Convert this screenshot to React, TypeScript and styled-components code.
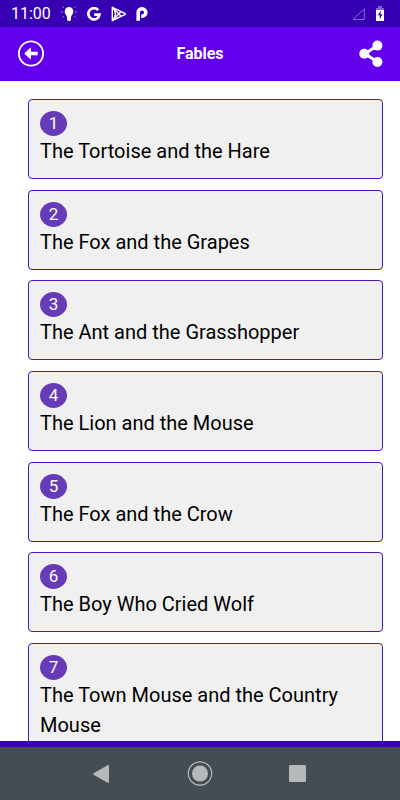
import React from "react";
import styled, { createGlobalStyle } from "styled-components";

const GlobalStyle = createGlobalStyle`
  * { box-sizing: border-box; }
  html, body, #root { height: 100%; margin: 0; }
  body { font-family: Roboto, sans-serif; background: #fff; color: #000; overflow: hidden; }
`;

const Screen = styled.div`
  height: 100%;
  display: flex;
  flex-direction: column;
`;

const StatusBar = styled.div`
  flex: none;
  height: 27px;
  padding: 0 16px 0 11px;
  display: flex;
  align-items: center;
  justify-content: space-between;
  background: #3700b3;
  color: #fff;
`;

const StatusGroup = styled.div<{ $gap: number }>`
  display: flex;
  align-items: center;
  gap: ${(p) => p.$gap}px;
`;

const Clock = styled.time`
  font-size: 16px;
  line-height: 20px;
  font-weight: 400;
`;

const AppBar = styled.header`
  flex: none;
  height: 54px;
  padding: 0 16px;
  display: flex;
  align-items: center;
  justify-content: space-between;
  background: #6200ee;
  color: #fff;
`;

const Title = styled.h1`
  margin: 0;
  font-size: 16px;
  line-height: 24px;
  font-weight: 700;
`;

const IconButton = styled.button`
  display: flex;
  justify-content: flex-end;
  min-width: 30px;
  padding: 0;
  border: 0;
  background: none;
  color: inherit;
  cursor: pointer;
`;

const Content = styled.main`
  flex: 1;
  min-height: 0;
  overflow: hidden;
  padding: 18px 17px 0 28px;
`;

const FableList = styled.ol`
  list-style: none;
  margin: 0;
  padding: 0;
`;

const FableItem = styled.li`
  margin-bottom: 3%;
`;

const FableCard = styled.a`
  display: block;
  padding: 11px;
  padding-bottom: 12px;
  border: 1px solid #4a16b8;
  border-radius: 4px;
  background: #f0f0f0;
  color: #000;
  text-decoration: none;
`;

const Badge = styled.span`
  display: block;
  width: 27px;
  height: 25px;
  border-radius: 50%;
  background: #673ab7;
  color: #fff;
  font-size: 17px;
  line-height: 25px;
  text-align: center;
`;

const FableName = styled.span`
  display: block;
  font-size: 20px;
  line-height: 30px;
`;

const NavBar = styled.nav`
  flex: none;
  height: 59px;
  border-top: 6px solid #3700b3;
  background: #454d52;
  color: #b5b9ba;
  display: flex;
  align-items: center;
  justify-content: center;
  gap: 68px;
`;

const fables = [
  "The Tortoise and the Hare",
  "The Fox and the Grapes",
  "The Ant and the Grasshopper",
  "The Lion and the Mouse",
  "The Fox and the Crow",
  "The Boy Who Cried Wolf",
  "The Town Mouse and the Country Mouse",
];

const BulbIcon = () => (
  <svg width="16" height="18" viewBox="0 0 16 18" fill="none" stroke="#fff">
    <path d="M8 2a4.4 4.4 0 0 0-4.3 4.5C3.7 9 5.6 10 6 12.4h4C10.4 10 12.3 9 12.3 6.5A4.4 4.4 0 0 0 8 2z" fill="#fff" stroke="none" />
    <path d="M6 12h4v3l-1 1H7l-1-1z" fill="#fff" stroke="none" />
    <path d="M0 7h2M14 7h2M1.5 1.5l1.3 1.3M14.5 1.5l-1.3 1.3M1.5 12.5l1.3-1.3M14.5 12.5l-1.3-1.3" strokeWidth="0.8" opacity="0.7" />
  </svg>
);

const GoogleIcon = () => (
  <svg width="14" height="14" viewBox="0 0 14 14" fill="none" stroke="#fff" strokeWidth="2.7">
    <path d="M11.2 3.1A5.6 5.6 0 1 0 12.5 7.6H7.2" />
  </svg>
);

const PlayIcon = () => (
  <svg width="15" height="16" viewBox="0 0 15 16" fill="none" stroke="#fff" strokeWidth="1.4" strokeLinejoin="round">
    <path d="M1.3 1.3v13.2L13.8 8.7q.8-.7 0-1.4z" />
    <path d="M1.3 1.3 10.2 10.2M1.3 14.5 10.2 5.4M1.5 1.5q5.8 6 0 13" />
  </svg>
);

const PIcon = () => (
  <svg width="12" height="14" viewBox="0 0 12 14" fill="none" stroke="#fff" strokeWidth="3.6">
    <path d="M2.2 13.8V5.8A3.8 3.7 0 1 1 6 9.2H5.2" />
  </svg>
);

const SignalIcon = () => (
  <svg width="13" height="12" viewBox="0 0 13 12" fill="none" stroke="#8d68d3">
    <path d="M12.3.8v10.7H1z" />
  </svg>
);

const BatteryIcon = () => (
  <svg width="8" height="15" viewBox="0 0 8 15">
    <path d="M2 0h4v2h2v2H0V2h2z" fill="#8060cc" />
    <path d="M0 4h8v11H0z" fill="#fff" />
    <path d="M5 4.5 1.7 9.2h2v4L6.5 8.3h-2z" fill="#3700b3" />
  </svg>
);

const BackIcon = () => (
  <svg width="30" height="28" viewBox="0 0 30 28" fill="none" stroke="#fff">
    <circle cx="15" cy="13.5" r="12.1" strokeWidth="1.9" />
    <path d="M14 11.7h7.7v3.6H14z" fill="#fff" stroke="none" />
    <path d="M8.7 13.5 14.5 8v11z" fill="#fff" strokeWidth="0.8" strokeLinejoin="round" />
  </svg>
);

const ShareIcon = () => (
  <svg width="25" height="28" viewBox="0 0 25 28" fill="#fff" stroke="#fff">
    <path d="M18.5 5.5 6 13.8l12.5 8.3" fill="none" strokeWidth="3" />
    <circle cx="5.3" cy="13.8" r="5" stroke="none" />
    <circle cx="18.4" cy="5.6" r="5" stroke="none" />
    <circle cx="18.4" cy="22" r="5" stroke="none" />
  </svg>
);

const NavBackIcon = () => (
  <svg width="30" height="26" viewBox="0 0 30 26" fill="currentColor">
    <path d="M6.6 12.3 20.5 4.2q1.5-.6 1.5.8v16q0 1.4-1.5.8L6.6 13.7q-1.1-.7 0-1.4z" />
  </svg>
);

const NavHomeIcon = () => (
  <svg width="30" height="26" viewBox="0 0 30 26" fill="currentColor">
    <circle cx="15" cy="12.5" r="11.7" fill="none" stroke="currentColor" strokeWidth="1.2" />
    <circle cx="15" cy="12.5" r="8" />
  </svg>
);

const NavRecentIcon = () => (
  <svg width="30" height="26" viewBox="0 0 30 26" fill="currentColor">
    <rect x="6" y="4" width="17" height="17" rx="1.2" />
  </svg>
);

export default function App() {
  return (
    <Screen>
      <GlobalStyle />
      <StatusBar>
        <StatusGroup $gap={10}>
          <Clock>11:00</Clock>
          <BulbIcon />
          <GoogleIcon />
          <PlayIcon />
          <PIcon />
        </StatusGroup>
        <StatusGroup $gap={11}>
          <SignalIcon />
          <BatteryIcon />
        </StatusGroup>
      </StatusBar>
      <AppBar>
        <IconButton type="button" aria-label="Back"><BackIcon /></IconButton>
        <Title>Fables</Title>
        <IconButton type="button" aria-label="Share"><ShareIcon /></IconButton>
      </AppBar>
      <Content>
        <FableList>
          {fables.map((name, i) => (
            <FableItem key={name}>
              <FableCard href={`#fable-${i + 1}`}>
                <Badge>{i + 1}</Badge>
                <FableName>{name}</FableName>
              </FableCard>
            </FableItem>
          ))}
        </FableList>
      </Content>
      <NavBar aria-label="System">
        <IconButton type="button" aria-label="Go back"><NavBackIcon /></IconButton>
        <IconButton type="button" aria-label="Home"><NavHomeIcon /></IconButton>
        <IconButton type="button" aria-label="Recent apps"><NavRecentIcon /></IconButton>
      </NavBar>
    </Screen>
  );
}
